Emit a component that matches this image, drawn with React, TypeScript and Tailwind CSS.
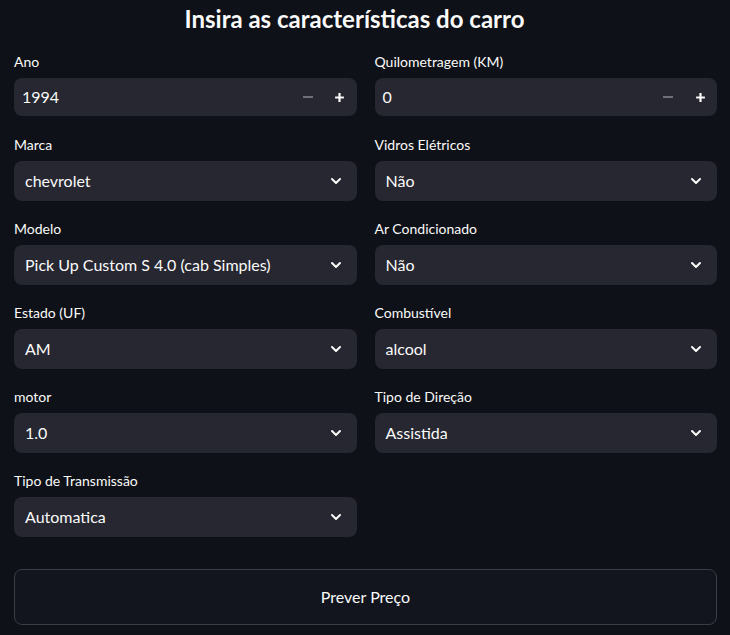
import React from "react";

const font = { fontFamily: "Lato, 'Liberation Sans', sans-serif" };

function Chevron() {
  return (
    <svg width="16" height="16" viewBox="0 0 24 24" fill="none" stroke="#fafafa" strokeWidth="3" strokeLinecap="round" strokeLinejoin="round">
      <path d="M6 9l6 6 6-6" />
    </svg>
  );
}

function Label({ text }: { text: string }) {
  return <div className="h-[17px] mb-[8px] flex items-center text-[14px] text-[#fafafa]">{text}</div>;
}

function NumberField({ label, value }: { label: string; value: string }) {
  return (
    <div>
      <Label text={label} />
      <div className="my-[1px] h-[38px] rounded-lg bg-[#262730] flex items-center pl-[8px] pr-[1px]">
        <span className="flex-1 text-[16px] text-[#fafafa]">{value}</span>
        <div className="w-8 flex justify-center">
          <div className="w-[10px] h-[2px] bg-[#6d6e76]" />
        </div>
        <div className="w-8 flex justify-center">
          <svg width="11" height="11" viewBox="0 0 10 10">
            <path d="M5 1v8M1 5h8" stroke="#fafafa" strokeWidth="2" />
          </svg>
        </div>
      </div>
    </div>
  );
}

function SelectField({ label, value }: { label: string; value: string }) {
  return (
    <div>
      <Label text={label} />
      <div className="h-10 rounded-lg bg-[#262730] flex items-center pl-[11px] pr-[13px]">
        <span className="flex-1 text-[16px] text-[#fafafa]">{value}</span>
        <Chevron />
      </div>
    </div>
  );
}

export default function App() {
  return (
    <div className="min-h-[635px] w-full bg-[#0e1117] pl-[14px] pr-[13px]" style={font}>
      <div className="h-[53px] flex items-start justify-center pt-[4px]">
        <h3 className="text-[24px] font-bold text-[#fafafa] leading-[30px] mr-[22px]">
          Insira as características do carro
        </h3>
      </div>
      <div className="grid grid-cols-2 gap-x-[18px] gap-y-[19px]">
        <NumberField label="Ano" value="1994" />
        <NumberField label="Quilometragem (KM)" value="0" />
        <SelectField label="Marca" value="chevrolet" />
        <SelectField label="Vidros Elétricos" value="Não" />
        <SelectField label="Modelo" value="Pick Up Custom S 4.0 (cab Simples)" />
        <SelectField label="Ar Condicionado" value="Não" />
        <SelectField label="Estado (UF)" value="AM" />
        <SelectField label="Combustível" value="alcool" />
        <SelectField label="motor" value="1.0" />
        <SelectField label="Tipo de Direção" value="Assistida" />
        <SelectField label="Tipo de Transmissão" value="Automatica" />
      </div>
      <button className="mt-[32px] w-full h-[56px] rounded-lg border border-[#3a3d45] bg-[#12151d] text-[16px] text-[#fafafa] flex items-center justify-center">
        Prever Preço
      </button>
    </div>
  );
}
